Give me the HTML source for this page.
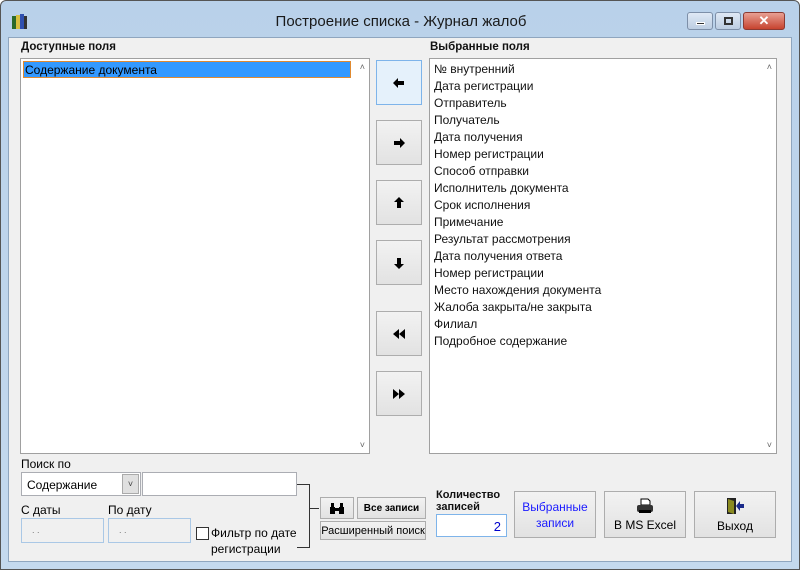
<!DOCTYPE html><html><head><meta charset="utf-8"><style>
*{box-sizing:border-box;margin:0;padding:0}
body{width:800px;height:570px;overflow:hidden;font-family:"Liberation Sans",sans-serif;font-size:12px;background:#fff}
.win{position:absolute;left:0;top:0;width:800px;height:570px;background:linear-gradient(#b9d1ea,#c4d9ee);border:1px solid #555;border-radius:6px 6px 0 0}
.title{position:absolute;left:0;width:800px;top:12px;text-align:center;font-size:15px;color:#1a1a1a}
.client{position:absolute;left:8px;top:37px;width:784px;height:525px;background:#f0f0f0;border:1px solid #8fa6bf}
.a{position:absolute}
.lbl{position:absolute;font-weight:bold;font-size:11.5px;color:#111}
.list{position:absolute;background:#fff;border:1px solid #a0a0a0}
.btn{position:absolute;background:linear-gradient(#f2f2f2,#e2e2e2);border:1px solid #adadad;display:flex;align-items:center;justify-content:center;text-align:center}
.item{position:absolute;left:4px;font-size:12px;color:#111}
.inp{position:absolute;background:#fff;border:1px solid #abadb3}
.dis{position:absolute;background:#f0f0f0;border:1px solid #aac8e6;color:#777;font-size:9px;padding:6px 0 0 10px}
</style></head><body>
<div class="win">
<svg class="a" style="left:10px;top:12px" width="18" height="17"><rect x="1" y="3" width="4" height="13" fill="#2a6a2a"/><rect x="5" y="2" width="4" height="14" fill="#d8c040"/><rect x="9" y="1" width="4" height="15" fill="#3050b0"/><rect x="13" y="3" width="3" height="13" fill="#333"/></svg>
<div class="title">Построение списка - Журнал жалоб</div>
<div class="a" style="left:686px;top:11px;width:26px;height:18px;border:1px solid #7d8fa8;border-radius:3px;background:linear-gradient(#dfe9f5,#bccde2)"><div class="a" style="left:8px;top:9px;width:9px;height:3px;background:#333;border:1px solid #fff"></div></div>
<div class="a" style="left:714px;top:11px;width:26px;height:18px;border:1px solid #7d8fa8;border-radius:3px;background:linear-gradient(#dfe9f5,#bccde2)"><div class="a" style="left:8px;top:4px;width:9px;height:8px;border:2px solid #333"></div></div>
<div class="a" style="left:742px;top:11px;width:42px;height:18px;border:1px solid #8b3a32;border-radius:3px;background:linear-gradient(#e8a093,#c7432f);color:#fff;font-weight:bold;text-align:center;font-size:13px;line-height:16px">✕</div>
</div>
<div class="client"></div>
<div class="lbl" style="left:21px;top:41px">Доступные поля</div>
<div class="lbl" style="left:430px;top:41px">Выбранные поля</div>
<div class="list" style="left:20px;top:58px;width:350px;height:396px">
<div class="a" style="left:2px;top:2px;width:328px;height:17px;background:#3399ff;border:1px solid #e08a30"></div>
<div class="item" style="top:4px;color:#000">Содержание документа</div>
<div class="a" style="right:4px;top:3px;color:#666;font-size:9px">˄</div><div class="a" style="right:4px;bottom:3px;color:#666;font-size:9px">˅</div>
</div>
<div class="list" style="left:429px;top:58px;width:348px;height:396px">
<div class="item" style="top:3px">№ внутренний</div>
<div class="item" style="top:20px">Дата регистрации</div>
<div class="item" style="top:37px">Отправитель</div>
<div class="item" style="top:54px">Получатель</div>
<div class="item" style="top:71px">Дата получения</div>
<div class="item" style="top:88px">Номер регистрации</div>
<div class="item" style="top:105px">Способ отправки</div>
<div class="item" style="top:122px">Исполнитель документа</div>
<div class="item" style="top:139px">Срок исполнения</div>
<div class="item" style="top:156px">Примечание</div>
<div class="item" style="top:173px">Результат рассмотрения</div>
<div class="item" style="top:190px">Дата получения ответа</div>
<div class="item" style="top:207px">Номер регистрации</div>
<div class="item" style="top:224px">Место нахождения документа</div>
<div class="item" style="top:241px">Жалоба закрыта/не закрыта</div>
<div class="item" style="top:258px">Филиал</div>
<div class="item" style="top:275px">Подробное содержание</div>
<div class="a" style="right:4px;top:3px;color:#666;font-size:9px">˄</div><div class="a" style="right:4px;bottom:3px;color:#666;font-size:9px">˅</div>
</div>
<div class="btn" style="left:376px;top:60px;width:46px;height:45px;background:#e5f1fb;border-color:#7eb4ea"><svg width="12" height="10"><path d="M0 5L5 0V3H11V7H5V10Z" fill="#000"/></svg></div>
<div class="btn" style="left:376px;top:120px;width:46px;height:45px"><svg width="12" height="10"><path d="M12 5L7 0V3H1V7H7V10Z" fill="#000"/></svg></div>
<div class="btn" style="left:376px;top:180px;width:46px;height:45px"><svg width="10" height="12"><path d="M5 0L0 5H3V11H7V5H10Z" fill="#000"/></svg></div>
<div class="btn" style="left:376px;top:240px;width:46px;height:45px"><svg width="10" height="12"><path d="M5 12L0 7H3V1H7V7H10Z" fill="#000"/></svg></div>
<div class="btn" style="left:376px;top:311px;width:46px;height:45px"><svg width="12" height="10"><path d="M0 5L6 0V10ZM6 5L12 0V10Z" fill="#000"/></svg></div>
<div class="btn" style="left:376px;top:371px;width:46px;height:45px"><svg width="12" height="10"><path d="M12 5L6 0V10ZM6 5L0 0V10Z" fill="#000"/></svg></div>
<div class="a" style="left:21px;top:457px">Поиск по</div>
<div class="inp" style="left:21px;top:472px;width:120px;height:24px;padding:5px 0 0 5px">Содержание</div>
<div class="a" style="left:122px;top:474px;width:17px;height:20px;background:#e0e0e0;border:1px solid #aaa;text-align:center;font-size:9px;line-height:18px;color:#444">˅</div>
<div class="inp" style="left:142px;top:472px;width:155px;height:24px"></div>
<div class="a" style="left:21px;top:503px">С даты</div>
<div class="a" style="left:108px;top:503px">По дату</div>
<div class="dis" style="left:21px;top:518px;width:83px;height:25px">. .</div>
<div class="dis" style="left:108px;top:518px;width:83px;height:25px">. .</div>
<div class="a" style="left:196px;top:527px;width:13px;height:13px;background:#fff;border:1px solid #333"></div>
<div class="a" style="left:211px;top:526px">Фильтр по дате</div>
<div class="a" style="left:211px;top:542px">регистрации</div>
<div class="a" style="left:297px;top:484px;width:13px;height:64px;border-top:1px solid #333;border-right:1px solid #333;border-bottom:1px solid #333"></div>
<div class="a" style="left:310px;top:508px;width:9px;border-top:1px solid #333"></div>
<div class="btn" style="left:320px;top:497px;width:34px;height:22px"><svg width="16" height="12"><path d="M1 5h5v7H1zM10 5h5v7h-5zM2 1h3v4H2zM11 1h3v4h-3zM6 6h4v3H6z" fill="#000"/></svg></div>
<div class="btn" style="left:357px;top:497px;width:69px;height:22px;font-size:10px;font-weight:bold">Все записи</div>
<div class="btn" style="left:320px;top:521px;width:106px;height:19px;font-size:11px">Расширенный поиск</div>
<div class="lbl" style="left:436px;top:489px;font-size:11px;line-height:12px">Количество<br>записей</div>
<div class="inp" style="left:436px;top:514px;width:71px;height:23px;border-color:#7eb4ea;text-align:right;padding:4px 5px 0 0;color:#0000cc;font-size:13px">2</div>
<div class="btn" style="left:514px;top:491px;width:82px;height:47px;color:#1a1aff;line-height:16px">Выбранные<br>записи</div>
<div class="btn" style="left:604px;top:491px;width:82px;height:47px;flex-direction:column"><svg width="18" height="16" style="margin-bottom:4px"><path d="M5 1h7l2 2v4H5z" fill="#fff" stroke="#000"/><rect x="1" y="7" width="16" height="7" rx="2" fill="#333"/><rect x="3" y="12" width="12" height="3" fill="#000"/></svg><span>В MS Excel</span></div>
<div class="btn" style="left:694px;top:491px;width:82px;height:47px;flex-direction:column"><svg width="20" height="18" style="margin-bottom:4px"><rect x="2" y="1" width="9" height="16" fill="#222"/><path d="M3 2l6 2v13l-6-2z" fill="#8a8a20"/><path d="M19 7h-4V4l-4 5 4 5v-3h4z" fill="#1a2a8a"/></svg><span>Выход</span></div>
</body></html>
